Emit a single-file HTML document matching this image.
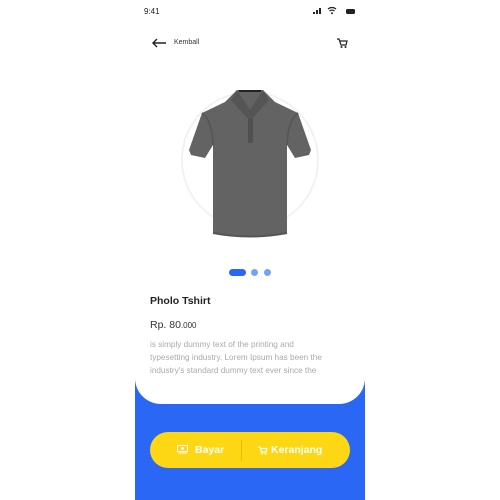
<!DOCTYPE html>
<html><head><style>
body{margin:0;width:500px;height:500px;background:#fff;position:relative;overflow:hidden;font-family:"Liberation Sans",sans-serif}
.ph{position:absolute;left:135px;top:0;width:230px;height:500px;background:#2a67f5;overflow:hidden}
.card{position:absolute;left:0;top:0;width:230px;height:404px;background:#fff;border-radius:0 0 26px 26px}
.t{position:absolute;white-space:nowrap}
.btn{position:absolute;left:15px;top:432px;width:200px;height:36px;background:#fdd614;border-radius:18px}
</style></head><body>
<div class="ph">
<div class="card"></div>
<div class="t" style="left:9px;top:7px;font-size:8px;color:#222">9:41</div>
<svg style="position:absolute;left:177px;top:6px" width="46" height="10">
<path d="M1 8h2v-2h-2zM4 8h2v-4h-2zM7 8h2v-6h-2z" fill="#222"/>
<path d="M16 3a6 6 0 0 1 8 0M17.5 5a4 4 0 0 1 5 0" stroke="#222" stroke-width="1.2" fill="none"/><circle cx="20" cy="7.2" r="1" fill="#222"/>
<rect x="34" y="3" width="9" height="5" rx="1.5" fill="#222"/>
</svg>
<svg style="position:absolute;left:16px;top:37px" width="16" height="12"><path d="M15 6H2M6 2L2 6l4 4" stroke="#222" stroke-width="1.4" fill="none"/></svg>
<div class="t" style="left:39px;top:39px;font-size:7px;color:#333">Kemball</div>
<svg style="position:absolute;left:201px;top:37px" width="12" height="12"><path d="M1 2h2l2 6h5l1-4H4" stroke="#222" stroke-width="1.2" fill="none"/><circle cx="5.5" cy="10" r="1" fill="#222"/><circle cx="9.5" cy="10" r="1" fill="#222"/></svg>
<svg style="position:absolute;left:0;top:0" width="230" height="260">
<circle cx="115" cy="160" r="68" fill="none" stroke="#f2f2f2" stroke-width="2"/>
<path d="M102 90L128 90L140 102L163 113L176 150L174 155L160 158L152 145L152 233Q115 240 78 233L78 145L70 158L56 155L54 150L67 113L90 102Z" fill="#636363"/>
<path d="M102 90L115 110L128 90L134 100L118 118L112 118L96 100Z" fill="#555"/>
<path d="M104 91h22" stroke="#222" stroke-width="2"/>
<path d="M113 118v25h5v-25z" fill="#505050"/>
<path d="M78 145Q77 120 67 113M152 145Q153 120 163 113" stroke="#555" stroke-width="1.5" fill="none"/>
<path d="M78 233Q115 240 152 233" stroke="#555" stroke-width="2" fill="none"/>
</svg>
<div style="position:absolute;left:94px;top:269px;width:17px;height:7px;border-radius:4px;background:#2a67f5"></div>
<div style="position:absolute;left:116px;top:269px;width:7px;height:7px;border-radius:50%;background:#7aa0f5"></div>
<div style="position:absolute;left:129px;top:269px;width:7px;height:7px;border-radius:50%;background:#7aa0f5"></div>
<div class="t" style="left:15px;top:295px;font-size:10.5px;font-weight:bold;color:#222">Pholo Tshirt</div>
<div class="t" style="left:15px;top:319px;font-size:10.5px;color:#333">Rp. 80<span style="font-size:8px">.000</span></div>
<div class="t" style="left:15px;top:338px;font-size:8.2px;line-height:13px;color:#aaa">is simply dummy text of the printing and<br>typesetting industry. Lorem Ipsum has been the<br>industry's standard dummy text ever since the</div>
<div class="btn">
<div style="position:absolute;left:91px;top:8px;width:1px;height:21px;background:#f0b800"></div>
<svg style="position:absolute;left:27px;top:13px" width="11" height="9"><rect x="0.5" y="0.5" width="10" height="6" fill="none" stroke="#fff"/><circle cx="5.5" cy="3.5" r="1.5" fill="#fff"/><path d="M1 8h9" stroke="#fff"/></svg>
<div class="t" style="left:45px;top:12px;font-size:10.5px;font-weight:bold;color:#fff">Bayar</div>
<svg style="position:absolute;left:108px;top:14px" width="10" height="9"><path d="M0 1h2l1.5 5h4.5l1-3.5H3" stroke="#fff" stroke-width="1.2" fill="none"/><circle cx="4" cy="8" r="0.9" fill="#fff"/><circle cx="7.5" cy="8" r="0.9" fill="#fff"/></svg>
<div class="t" style="left:121px;top:12px;font-size:10.5px;font-weight:bold;color:#fff">Keranjang</div>
</div>
</div>
</body></html>
